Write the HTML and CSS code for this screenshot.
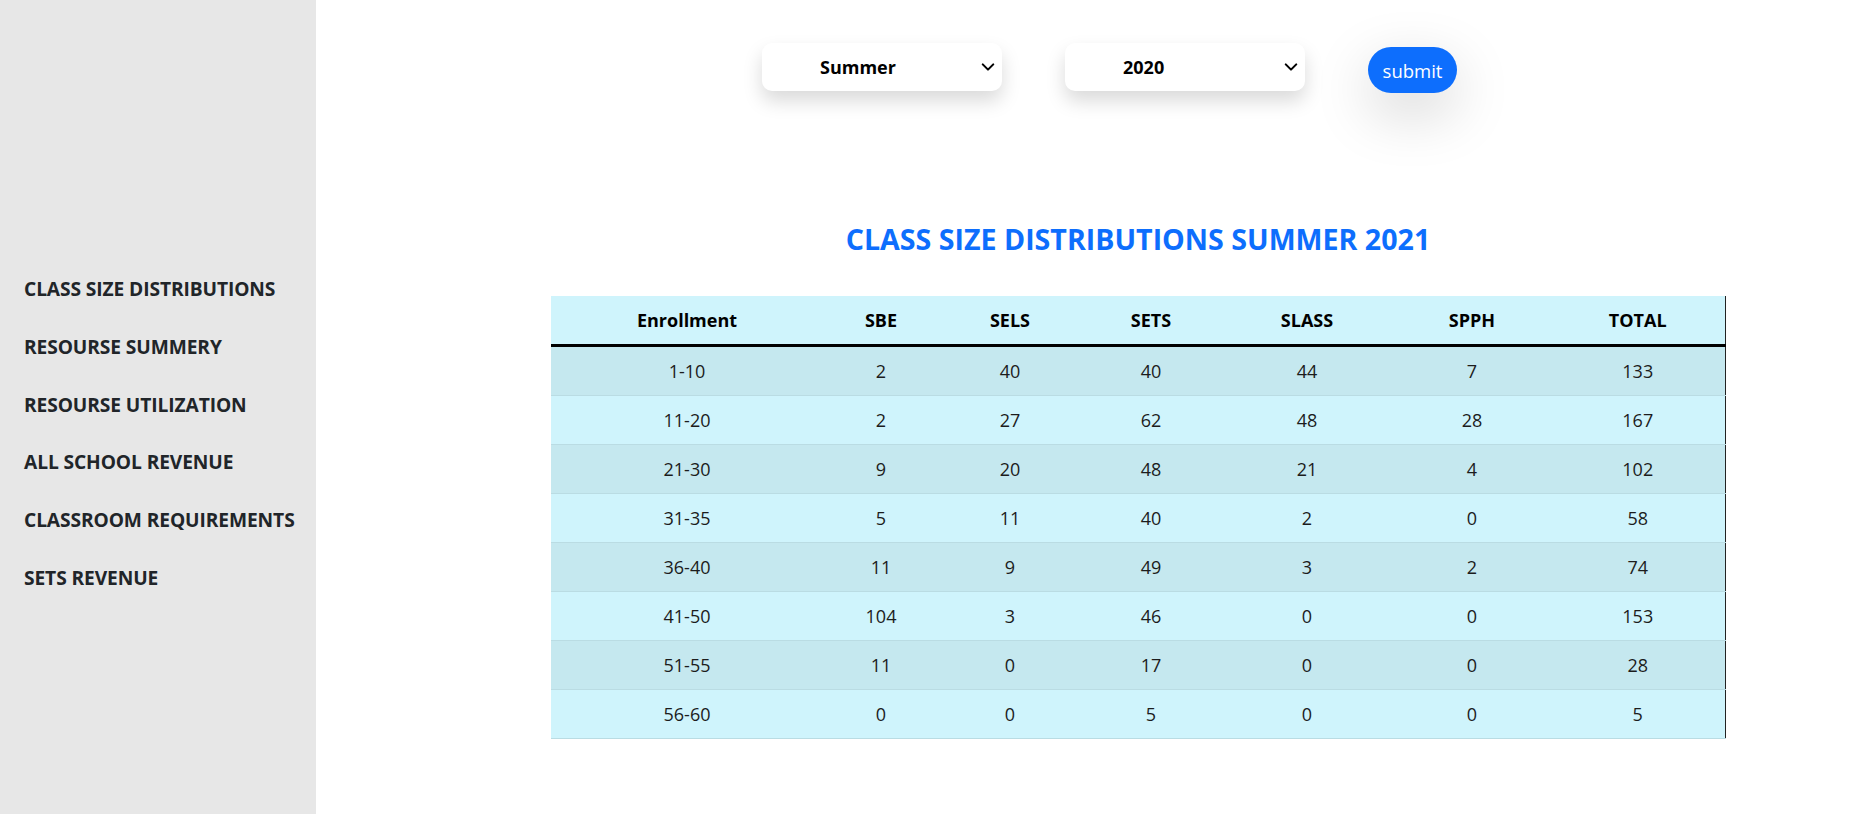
FILE: index.html
```html
<!DOCTYPE html>
<html lang="en">
<head>
<meta charset="utf-8">
<title>Class Size Distributions</title>
<link rel="stylesheet" href="styles.css">
</head>
<body>
<div class="layout">
  <aside class="sidebar">
    <nav class="nav">
      <a class="nav-link" href="#">CLASS SIZE DISTRIBUTIONS</a>
      <a class="nav-link" href="#">RESOURSE SUMMERY</a>
      <a class="nav-link" href="#">RESOURSE UTILIZATION</a>
      <a class="nav-link" href="#">ALL SCHOOL REVENUE</a>
      <a class="nav-link" href="#">CLASSROOM REQUIREMENTS</a>
      <a class="nav-link" href="#">SETS REVENUE</a>
    </nav>
  </aside>
  <main class="main">
    <form class="filters">
      <div class="select-wrap">
        <select class="form-select">
          <option>Summer</option>
          <option>Fall</option>
          <option>Spring</option>
        </select>
        <svg class="chevron" viewBox="0 0 16 16" width="14" height="14"><path d="m2 5 6 6 6-6" fill="none" stroke="#000" stroke-width="2.4" stroke-linecap="round" stroke-linejoin="round"/></svg>
      </div>
      <div class="select-wrap">
        <select class="form-select">
          <option>2020</option>
          <option>2021</option>
          <option>2022</option>
        </select>
        <svg class="chevron" viewBox="0 0 16 16" width="14" height="14"><path d="m2 5 6 6 6-6" fill="none" stroke="#000" stroke-width="2.4" stroke-linecap="round" stroke-linejoin="round"/></svg>
      </div>
      <button type="button" class="btn-submit">submit</button>
    </form>
    <section class="report">
      <h3 class="report-title">CLASS SIZE DISTRIBUTIONS SUMMER 2021</h3>
      <table class="data-table">
        <colgroup>
          <col class="c1"><col class="c2"><col class="c3"><col class="c4"><col class="c5"><col class="c6"><col class="c7">
        </colgroup>
        <thead>
          <tr><th>Enrollment</th><th>SBE</th><th>SELS</th><th>SETS</th><th>SLASS</th><th>SPPH</th><th>TOTAL</th></tr>
        </thead>
        <tbody>
          <tr><td>1-10</td><td>2</td><td>40</td><td>40</td><td>44</td><td>7</td><td>133</td></tr>
          <tr><td>11-20</td><td>2</td><td>27</td><td>62</td><td>48</td><td>28</td><td>167</td></tr>
          <tr><td>21-30</td><td>9</td><td>20</td><td>48</td><td>21</td><td>4</td><td>102</td></tr>
          <tr><td>31-35</td><td>5</td><td>11</td><td>40</td><td>2</td><td>0</td><td>58</td></tr>
          <tr><td>36-40</td><td>11</td><td>9</td><td>49</td><td>3</td><td>2</td><td>74</td></tr>
          <tr><td>41-50</td><td>104</td><td>3</td><td>46</td><td>0</td><td>0</td><td>153</td></tr>
          <tr><td>51-55</td><td>11</td><td>0</td><td>17</td><td>0</td><td>0</td><td>28</td></tr>
          <tr><td>56-60</td><td>0</td><td>0</td><td>5</td><td>0</td><td>0</td><td>5</td></tr>
        </tbody>
      </table>
    </section>
  </main>
</div>
</body>
</html>
```
FILE: styles.css
```css
* { box-sizing: border-box; }
html, body { margin: 0; padding: 0; }
body {
  font-family: "Open Sans", "Noto Sans", "Liberation Sans", sans-serif;
  font-size: 19.2px;
  line-height: 1.5;
  color: #212529;
  background: #fff;
  overflow: hidden;
}
.layout { display: flex; min-height: 814px; }
.sidebar {
  width: 316px;
  flex: 0 0 316px;
  background: #e7e7e7;
  padding: 275px 0 0 24px;
}
.nav { display: flex; flex-direction: column; gap: 29px; }
.nav-link {
  color: #212529;
  text-decoration: none;
  font-weight: 700;
  font-size: 19.2px;
  line-height: 28.8px;
  letter-spacing: -0.1px;
}
.main { flex: 1; min-width: 0; }
.filters {
  display: flex;
  align-items: flex-start;
  gap: 63px;
  padding: 43px 0 0 446px;
  margin: 0;
}
.select-wrap { position: relative; width: 240px; height: 48px; }
.form-select {
  appearance: none;
  -webkit-appearance: none;
  width: 240px;
  height: 48px;
  border: none;
  border-radius: 10px;
  background: #fff;
  box-shadow: 0 10px 19px rgba(0,0,0,0.15);
  padding: 0 40px 0 58px;
  font-family: inherit;
  font-size: 18px;
  font-weight: 700;
  color: #000;
  text-align: left;
  outline: none;
}
.chevron { position: absolute; right: 7px; top: 17px; pointer-events: none; }
.btn-submit {
  margin-top: 4px;
  width: 89px;
  height: 46px;
  border: none;
  border-radius: 23px;
  background: #0d6efd;
  color: #fff;
  font-family: inherit;
  font-size: 18.5px;
  padding: 0;
  box-shadow: 0 19px 58px rgba(0,0,0,0.175);
}
.report { width: 1174px; margin: 126px 0 0 235px; }
.report-title {
  margin: 0 0 37px;
  text-align: center;
  color: #0d6efd;
  font-size: 28.6px;
  line-height: 40px;
  font-weight: 700;
}
.data-table {
  width: 1174px;
  table-layout: fixed;
  border-collapse: collapse;
  background: #cff4fc;
  color: #000;
  border-right: 1px solid #222;
}
.c1 { width: 272px; } .c2 { width: 116px; } .c3 { width: 142px; } .c4 { width: 140px; }
.c5 { width: 172px; } .c6 { width: 158px; } .c7 { width: 174px; }
.data-table th, .data-table td {
  text-align: center;
  padding: 9.6px;
  line-height: 28.8px;
}
.data-table th {
  font-weight: 700;
  font-size: 18px;
  border-bottom: 3px solid #000;
  height: 48px;
}
.data-table td {
  font-weight: 400;
  font-size: 18px;
  color: #1c1c1c;
  border-bottom: 1px solid #badce3;
  height: 49px;
}
.data-table tbody tr:nth-child(odd) td { background: #c5e8ef; }
```
